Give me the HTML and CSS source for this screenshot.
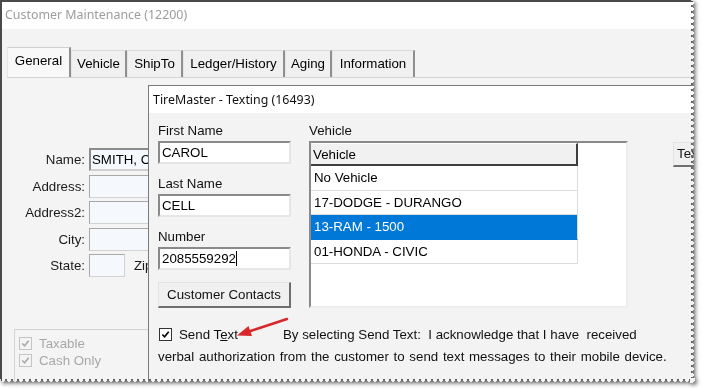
FILE: index.html
```html
<!DOCTYPE html>
<html lang="en">
<head>
  <meta charset="UTF-8">
  <title>Customer Maintenance - Texting</title>
  <link rel="stylesheet" href="styles.css">
</head>
<body>
  <div class="frame">
    <div class="shot">

      <!-- Customer Maintenance window (behind) -->
      <div class="win">
        <div class="win-title">Customer Maintenance (12200)</div>
        <div class="tabs">
          <div class="tab active">General</div>
          <div class="tab">Vehicle</div>
          <div class="tab">ShipTo</div>
          <div class="tab">Ledger/History</div>
          <div class="tab">Aging</div>
          <div class="tab">Information</div>
        </div>
        <div class="page">
          <div class="form">
            <span class="flabel">Name:</span><div class="in in-dark">SMITH, C</div>
            <span class="flabel">Address:</span><div class="in"></div>
            <span class="flabel">Address2:</span><div class="in"></div>
            <span class="flabel">City:</span><div class="in"></div>
            <span class="flabel">State:</span>
            <div class="state-row"><div class="in in-short"></div><span class="zip">Zip</span></div>
          </div>
          <div class="flags">
            <div class="flag"><span class="cb cb-off"><svg viewBox="0 0 12 12"><path d="M2.5 6 L5 8.5 L9.5 3"/></svg></span>Taxable</div>
            <div class="flag"><span class="cb cb-off"><svg viewBox="0 0 12 12"><path d="M2.5 6 L5 8.5 L9.5 3"/></svg></span>Cash Only</div>
          </div>
        </div>
      </div>

      <!-- TireMaster - Texting dialog (front) -->
      <div class="dlg">
        <div class="dlg-title">TireMaster - Texting (16493)</div>
        <div class="dlg-body">
          <div class="dlg-main">
            <div class="col-left">
              <div class="lbl">First Name</div>
              <div class="fld">CAROL</div>
              <div class="lbl">Last Name</div>
              <div class="fld">CELL</div>
              <div class="lbl">Number</div>
              <div class="fld">2085559292<span class="caret"></span></div>
              <div class="btn btn-contacts">Customer Contacts</div>
            </div>
            <div class="col-right">
              <div class="lbl">Vehicle</div>
              <div class="vlist">
                <div class="vhead">Vehicle</div>
                <div class="vrow">No Vehicle</div>
                <div class="vrow">17-DODGE - DURANGO</div>
                <div class="vrow selected">13-RAM - 1500</div>
                <div class="vrow">01-HONDA - CIVIC</div>
              </div>
            </div>
            <div class="btn btn-te">Text</div>
          </div>
          <p class="consent">
            <span class="cb cb-on"><svg viewBox="0 0 12 12"><path d="M2.5 6 L5 8.5 L9.5 3"/></svg></span><span class="cb-label">Send T<span class="key">e</span>xt</span>By selecting Send Text:&nbsp; I acknowledge that I have&nbsp; received<br><span class="wide">verbal authorization from the customer to send text messages to their mobile device.</span>
          </p>
        </div>
      </div>

      <svg class="arrow" width="64" height="30" viewBox="0 0 64 30">
        <line x1="57" y1="7" x2="19" y2="19.5" stroke="#d9282c" stroke-width="2.5" stroke-linecap="round"/>
        <polygon points="7,23.5 22,24 18.5,14" fill="#d9282c"/>
      </svg>
    </div>
  </div>
</body>
</html>
```

FILE: styles.css
```css
body {
  margin: 0;
  background: #fff;
  font-family: "Liberation Sans", Arial, sans-serif;
  font-size: 13.3px;
  color: #000;
}

.frame {
  width: 702px;
  height: 388px;
  filter: drop-shadow(2px 2px 2px rgba(0, 0, 0, 0.7));
}

/* torn screenshot edges, right and bottom */
.shot {
  position: relative;
  width: 695px;
  height: 383px;
  overflow: hidden;
  background: #f3f3f3;
  -webkit-mask:
    linear-gradient(#000 0 0) 0 0 / calc(100% - 5px) calc(100% - 5px) no-repeat,
    conic-gradient(from 239deg at 100% 50%, #000 62deg, #0000 0) 100% 0 / 5px 6px repeat-y,
    conic-gradient(from 329deg at 50% 100%, #000 62deg, #0000 0) 0 100% / 6px 5px repeat-x;
  mask:
    linear-gradient(#000 0 0) 0 0 / calc(100% - 5px) calc(100% - 5px) no-repeat,
    conic-gradient(from 239deg at 100% 50%, #000 62deg, #0000 0) 100% 0 / 5px 6px repeat-y,
    conic-gradient(from 329deg at 50% 100%, #000 62deg, #0000 0) 0 100% / 6px 5px repeat-x;
}

/* back window */
.win {
  height: 100%;
  border-top: 2px solid #4a4a4a;
  border-left: 2px solid #4a4a4a;
  box-sizing: border-box;
}
.win-title {
  height: 27px;
  line-height: 25px;
  padding-left: 3px;
  background: #fff;
  color: #9c9c9c;
  font-family: "Noto Sans", sans-serif;
  font-size: 12.4px;
}
.tabs {
  display: grid;
  grid-template-columns: 64px 56px 56px 102px 47px 83px;
  align-items: end;
  height: 30px;
  margin: 18px 0 0 5px;
}
.tab {
  height: 27px;
  box-sizing: border-box;
  line-height: 26px;
  text-align: center;
  background: #f0f0f0;
  border-top: 1px solid #dadada;
  border-left: 1px solid #e6e6e6;
  border-right: 2px solid #8f8f8f;
}
.tab.active {
  height: 30px;
  line-height: 26px;
  background: #f8f8f8;
  border-top-color: #d0d0d0;
}
.page {
  margin-left: 5px;
  border-top: 1px solid #d3d3d3;
  padding-top: 70px;
  background: #f4f4f4;
  height: 300px;
}
.form {
  display: grid;
  grid-template-columns: 78px 200px;
  column-gap: 4px;
  row-gap: 3.5px;
}
.flabel {
  text-align: right;
  line-height: 23px;
  color: #1a1a1a;
}
.in {
  height: 23px;
  box-sizing: border-box;
  padding-left: 2px;
  line-height: 21px;
  background: #f5f8fd;
  border: 1px solid #d2d2d2;
  border-top-color: #a8a8a8;
  border-left-color: #a8a8a8;
}
.in-dark {
  border: 2px solid #8c8c8c;
  border-right-color: #cfcfcf;
  border-bottom-color: #cfcfcf;
  line-height: 19px;
  padding-left: 1px;
}
.state-row {
  display: flex;
  align-items: center;
  gap: 9px;
}
.in-short {
  width: 36px;
}
.zip {
  color: #1a1a1a;
}
.flags {
  margin: 52px 0 0 7px;
  width: 220px;
  height: 60px;
  border: 1px solid #d3d3d3;
  padding: 5px 0 0 4px;
  box-sizing: border-box;
  color: #a8a8a8;
}
.flag {
  display: flex;
  align-items: center;
  height: 17px;
}

.cb {
  display: inline-block;
  width: 13px;
  height: 13px;
  box-sizing: border-box;
  margin-right: 7px;
  vertical-align: -2px;
}
.cb svg {
  display: block;
  width: 11px;
  height: 11px;
  fill: none;
  stroke-width: 1.8;
}
.cb-off {
  border: 1px solid #c4c4c4;
  background: #f4f4f4;
}
.cb-off svg {
  stroke: #a9a9a9;
}
.cb-on {
  border: 1px solid #333;
  background: #fff;
  margin-left: 1px;
}
.cb-on svg {
  stroke: #000;
}

/* front dialog */
.dlg {
  position: absolute;
  left: 148px;
  top: 85px;
  width: 580px;
  height: 330px;
  border: 1px solid #7a7a7a;
  background: #f3f3f3;
}
.dlg-title {
  height: 27px;
  line-height: 27px;
  padding-left: 4px;
  background: #fff;
  font-family: "Noto Sans", sans-serif;
  font-size: 12.4px;
  color: #111;
}
.dlg-body {
  padding: 10px 0 0 9px;
}
.dlg-main {
  display: grid;
  grid-template-columns: 133px 319px auto;
  column-gap: 18px;
  align-items: start;
}
.col-left,
.col-right {
  display: flex;
  flex-direction: column;
}
.lbl {
  line-height: 16px;
  margin-bottom: 2px;
  color: #111;
}
.fld {
  height: 23px;
  box-sizing: border-box;
  margin-bottom: 12px;
  padding-left: 2px;
  line-height: 19px;
  background: #fff;
  border: 2px solid #e6e6e6;
  border-top-color: #8a8a8a;
  border-left-color: #8a8a8a;
}
.caret {
  display: inline-block;
  width: 1px;
  height: 15px;
  background: #000;
  vertical-align: -3px;
}
.btn {
  box-sizing: border-box;
  text-align: center;
  background: #f0f0f0;
  border: 1px solid #e3e3e3;
  border-right: 2px solid #6e6e6e;
  border-bottom: 2px solid #6e6e6e;
  color: #111;
}
.btn-contacts {
  height: 26px;
  line-height: 23px;
}
.btn-te {
  width: 70px;
  height: 25px;
  line-height: 22px;
  margin: 19px 0 0 27px;
  text-align: left;
  padding-left: 3px;
}
.vlist {
  height: 167px;
  box-sizing: border-box;
  background: #fff;
  border: 2px solid #eeeeee;
  border-top-color: #8a8a8a;
  border-left-color: #8a8a8a;
}
.vhead {
  width: 267px;
  height: 23px;
  box-sizing: border-box;
  padding-left: 2px;
  line-height: 21px;
  background: #f1f1f1;
  border-top: 1px solid #fff;
  border-right: 2px solid #3e3e3e;
  border-bottom: 2px solid #3e3e3e;
}
.vrow {
  width: 267px;
  height: 24.5px;
  box-sizing: border-box;
  padding-left: 3px;
  line-height: 23px;
  border-right: 1px solid #dcdcdc;
  border-bottom: 1px solid #dcdcdc;
}
.vrow.selected {
  background: #0078d7;
  color: #fff;
  border-bottom-color: #0078d7;
}
.consent {
  margin: 16px 0 0 0;
  line-height: 22px;
  color: #111;
}
.cb-label {
  margin-right: 45px;
}
.key {
  text-decoration: underline;
}
.wide {
  word-spacing: 1px;
}

.arrow {
  position: absolute;
  left: 230px;
  top: 312px;
}
```
